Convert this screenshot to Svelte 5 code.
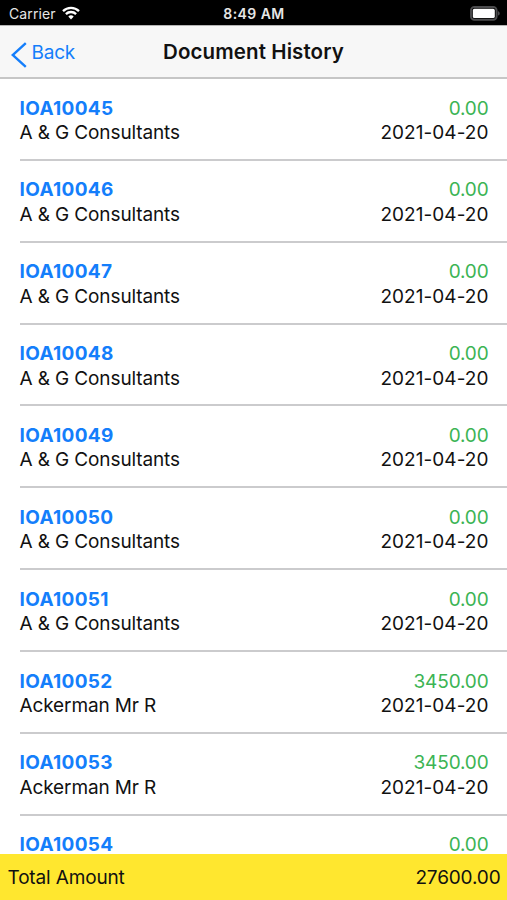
<script lang="ts">
  type Doc = { id: string; amount: number; customer?: string; date?: string };

  const total = 27600;

  const docs: Doc[] = [
    { id: 'IOA10045', customer: 'A & G Consultants', amount: 0, date: '2021-04-20' },
    { id: 'IOA10046', customer: 'A & G Consultants', amount: 0, date: '2021-04-20' },
    { id: 'IOA10047', customer: 'A & G Consultants', amount: 0, date: '2021-04-20' },
    { id: 'IOA10048', customer: 'A & G Consultants', amount: 0, date: '2021-04-20' },
    { id: 'IOA10049', customer: 'A & G Consultants', amount: 0, date: '2021-04-20' },
    { id: 'IOA10050', customer: 'A & G Consultants', amount: 0, date: '2021-04-20' },
    { id: 'IOA10051', customer: 'A & G Consultants', amount: 0, date: '2021-04-20' },
    { id: 'IOA10052', customer: 'Ackerman Mr R', amount: 3450, date: '2021-04-20' },
    { id: 'IOA10053', customer: 'Ackerman Mr R', amount: 3450, date: '2021-04-20' },
    { id: 'IOA10054', amount: 0 }
  ];
</script>

<div class="screen">
  <div class="status-bar">
    <div class="carrier">
      <span>Carrier</span>
      <svg class="wifi" viewBox="0 0 18 14" aria-hidden="true">
        <path d="M1 5.1a11.4 11.4 0 0 1 16 0" />
        <path d="M3.9 8.1a7.2 7.2 0 0 1 10.2 0" />
        <path class="dot" d="M6.3 10.6a3.9 3.9 0 0 1 5.4 0L9 13.4z" />
      </svg>
    </div>
    <span class="time">8:49 AM</span>
    <svg class="battery" viewBox="0 0 31 15" aria-hidden="true">
      <rect class="shell" x="1" y="1" width="25.6" height="12.8" rx="3.4" />
      <rect class="charge" x="2.8" y="2.8" width="22" height="9.2" rx="1.6" />
      <path class="tip" d="M28 5.2c2.3.7 2.3 3.7 0 4.4z" />
    </svg>
  </div>

  <header class="nav-bar">
    <button class="back">
      <svg viewBox="0 0 16 26" aria-hidden="true">
        <path d="M14.8 1.2 1.7 13l13.1 11.8" />
      </svg>
      <span>Back</span>
    </button>
    <h1>Document History</h1>
  </header>

  <ul class="list">
    {#each docs as doc (doc.id)}
      <li class="row">
        <div class="line">
          <span class="doc-id">{doc.id}</span>
          <span class="amount">{doc.amount.toFixed(2)}</span>
        </div>
        {#if doc.customer}
          <div class="line">
            <span class="customer">{doc.customer}</span>
            <span class="date">{doc.date}</span>
          </div>
        {/if}
      </li>
    {/each}
  </ul>

  <footer class="total">
    <span class="total-label">Total Amount</span>
    <span class="total-value">{total.toFixed(2)}</span>
  </footer>
</div>

<style>
  :global(body) {
    margin: 0;
  }

  .screen {
    display: flex;
    flex-direction: column;
    height: 900px;
    overflow: hidden;
    background: #fff;
    color: #111;
    font-family: Inter, 'Liberation Sans', sans-serif;
    font-size: 19px;
  }

  .status-bar {
    display: grid;
    grid-template-columns: 1fr auto 1fr;
    align-items: center;
    flex: none;
    box-sizing: border-box;
    height: 25px;
    padding: 2px 6px 0 9px;
    background: #000;
    color: #e6e6e6;
    font-size: 14px;
    line-height: 20px;
  }

  .carrier {
    display: flex;
    align-items: center;
    gap: 6px;
    letter-spacing: 0.1px;
  }

  .wifi {
    width: 18px;
    height: 14px;
    margin-top: -1px;
    fill: none;
    stroke: #fff;
    stroke-width: 2.3;
  }

  .wifi .dot {
    fill: #fff;
    stroke: none;
  }

  .time {
    font-weight: 600;
    letter-spacing: 0.45px;
    /* keeps the clock optically centred against the side items */
    margin-right: 2px;
  }

  .battery {
    justify-self: end;
    width: 31px;
    height: 15px;
    margin-top: -1px;
  }

  .shell {
    fill: none;
    stroke: #4c4c4e;
    stroke-width: 1.9;
  }

  .charge {
    fill: #fff;
  }

  .tip {
    fill: #4c4c4e;
  }

  .nav-bar {
    display: grid;
    grid-template-columns: 1fr auto 1fr;
    align-items: center;
    flex: none;
    box-sizing: border-box;
    height: 54px;
    padding: 1px 11px 0;
    background: #f7f7f7;
    border-top: 1px solid #b4b4b4;
    border-bottom: 2px solid #c6c6c6;
  }

  .back {
    display: flex;
    align-items: center;
    gap: 4.5px;
    padding: 2px 0 0;
    border: 0;
    background: none;
    color: #147efb;
    font: inherit;
    letter-spacing: -0.2px;
    line-height: 24px;
  }

  .back svg {
    width: 16px;
    height: 26px;
    margin-top: 3px;
    fill: none;
    stroke: currentColor;
    stroke-width: 2.4;
  }

  h1 {
    margin: 0;
    font-size: 20.5px;
    font-weight: 600;
    letter-spacing: 0.1px;
    line-height: 24px;
  }

  .list {
    flex: 1;
    min-height: 0;
    margin: 0;
    padding: 0 0 0 19.5px;
    overflow: hidden;
    list-style: none;
  }

  .row {
    box-sizing: border-box;
    height: 81.85px;
    padding: 17.6px 18.5px 0 0;
    border-bottom: 2px solid #cbcbcd;
  }

  .line {
    display: flex;
    justify-content: space-between;
    line-height: 24.5px;
  }

  .doc-id {
    color: #147efb;
    font-weight: 700;
    letter-spacing: 0.35px;
  }

  .amount {
    color: #3cb454;
    letter-spacing: -0.15px;
  }

  .customer {
    letter-spacing: -0.12px;
  }

  .date {
    letter-spacing: 0.05px;
  }

  .total {
    display: flex;
    align-items: center;
    justify-content: space-between;
    flex: none;
    box-sizing: border-box;
    height: 46px;
    padding: 1px 6.5px 0 7.5px;
    background: #ffe72f;
    letter-spacing: -0.15px;
  }
</style>
